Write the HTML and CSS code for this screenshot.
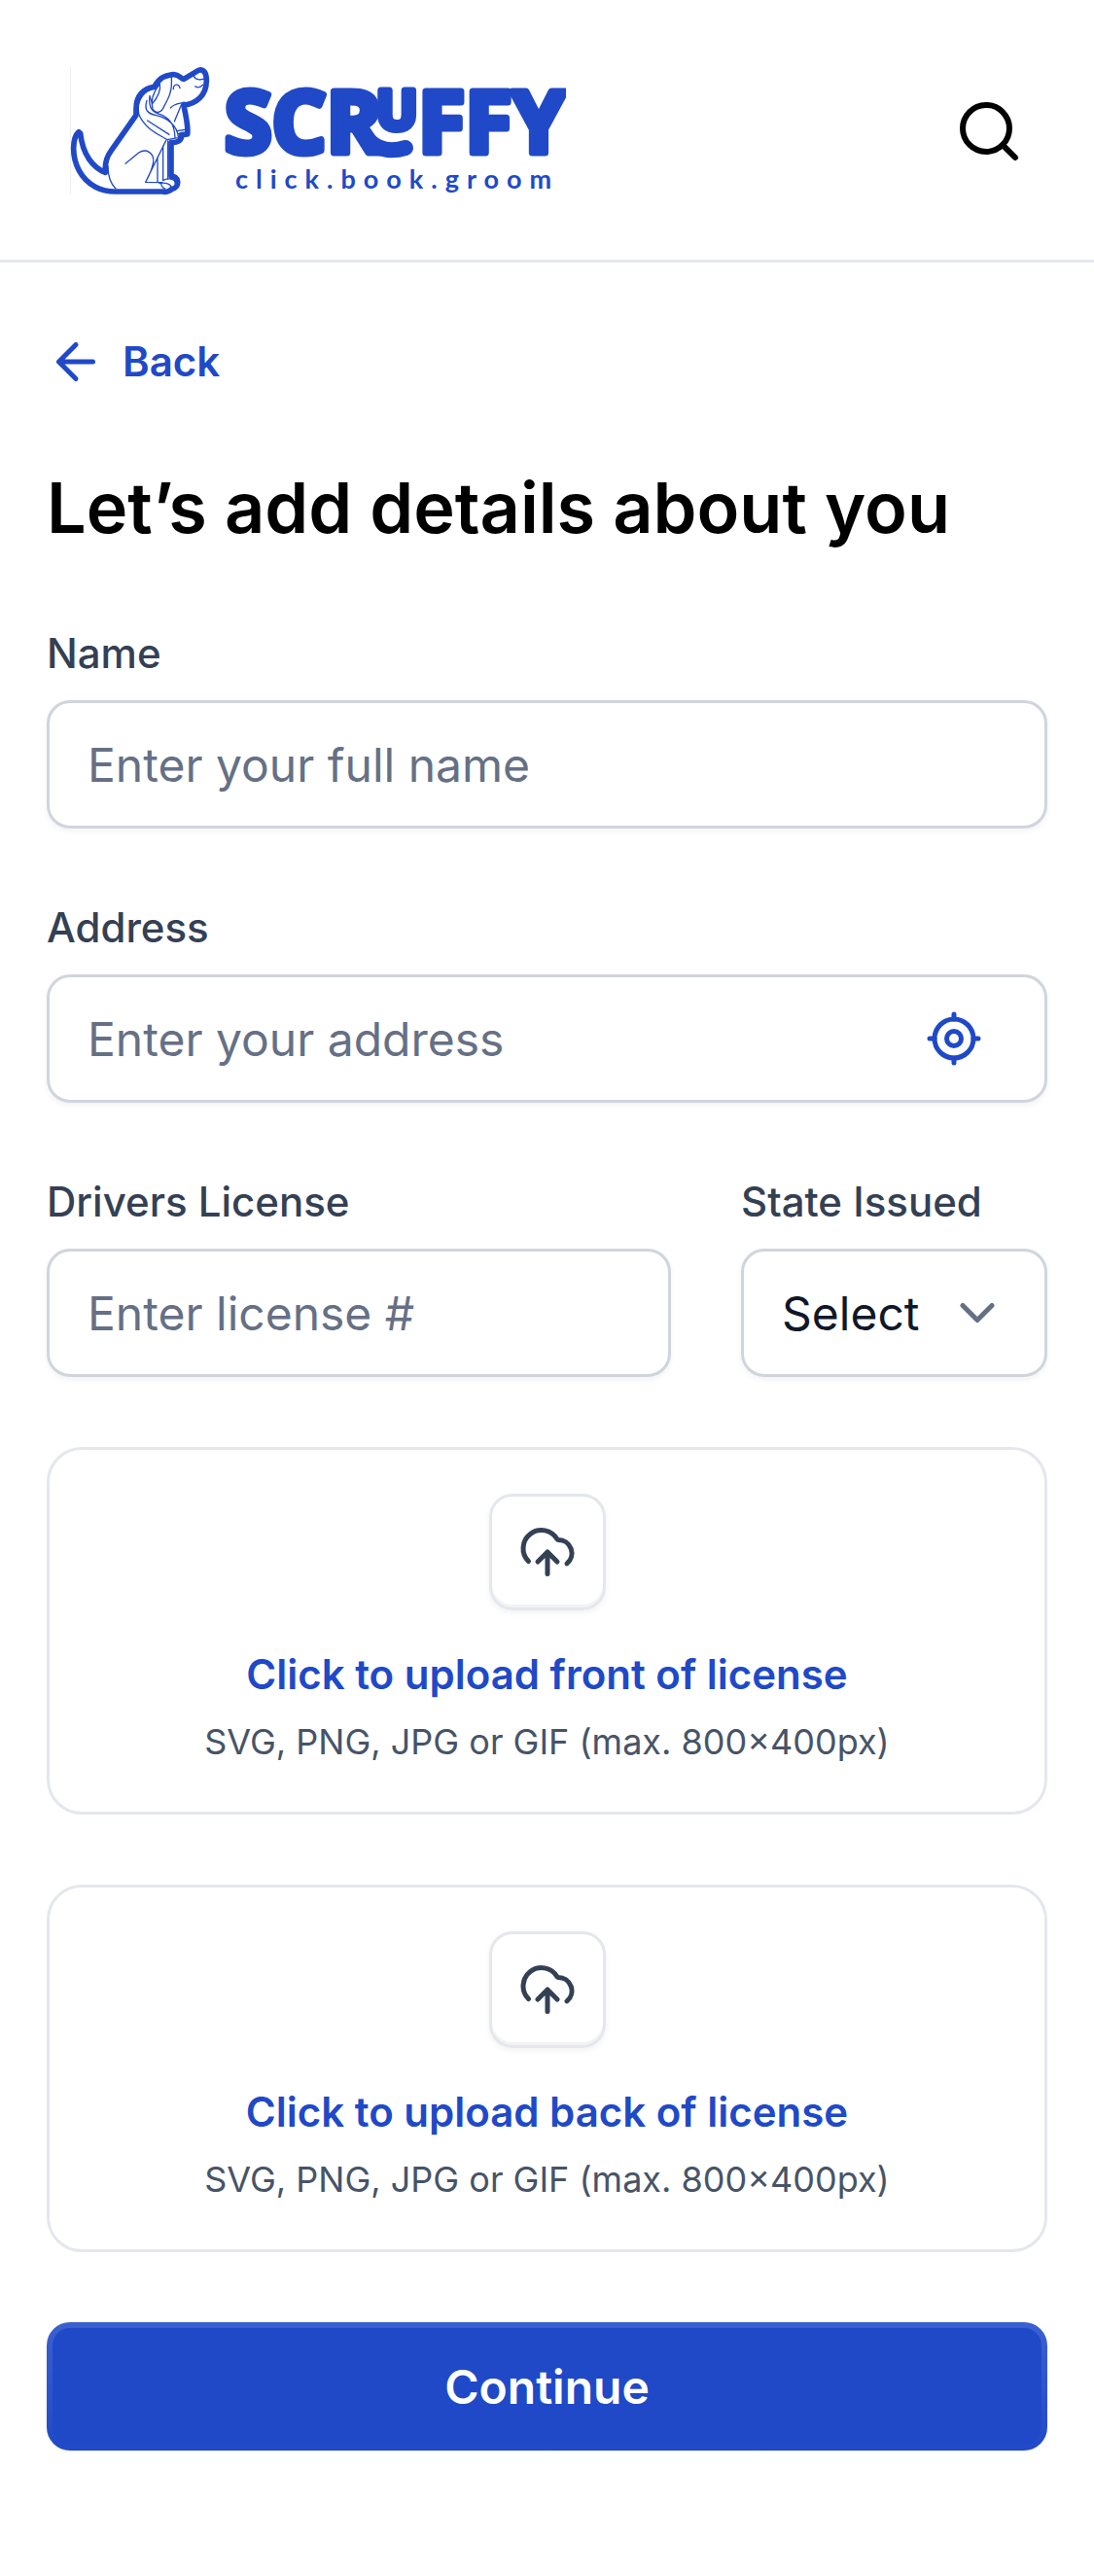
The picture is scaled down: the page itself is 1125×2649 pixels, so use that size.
FILE: index.html
```html
<!DOCTYPE html>
<html lang="en">
<head>
  <meta charset="UTF-8">
  <meta name="viewport" content="width=device-width, initial-scale=1.0">
  <title>Scruffy - Your details</title>
  <link rel="stylesheet" href="styles.css">
</head>
<body>
  <header class="header">
    <a href="#" class="logo" aria-label="Scruffy home">
      <svg class="logo-art" viewBox="0 0 510 132">
        <path class="logo-edge" d="M0.5 0V131"/>
        <!-- dog -->
        <g class="dog" transform="translate(-22 -19) scale(.3333)">
          <path class="dog-outline" d="M93 257C73 275 70 332 94 376C120 424 165 441 205 441L352 441C362 444 374 440 380 433C392 432 399 422 398 410C397 399 388 393 378 394L378 290C398 291 411 284 410 266L428 264C432 240 423 210 417 174C455 170 487 145 487 98C487 74 478 62 462 67L417 94C407 94 403 78 384 80C354 84 341 92 326 118C294 122 270 145 270 185L270 205L192 316C178 335 173 357 175 382C138 368 105 328 98 262Z"/>
          <path d="M183 362C183 395 190 415 207 432M237 355L278 321C300 307 326 320 323 350C320 375 308 395 299 412L350 413M362 284L299 412M336 335V411M353 300V407M368 285V402"/>
          <path d="M350 413C344 419 350 430 359 432M342 416C362 411 381 420 377 431M353 406C375 398 390 402 391 416"/>
          <path d="M326 120C292 134 268 163 279 205C300 250 340 265 366 281M305 222L372 265M303 160C294 190 305 200 332 206C368 214 397 238 400 272M312 145C306 190 326 197 350 205C380 220 388 240 390 274M366 281L403 274M410 172L388 225M398 254L426 249M402 262L426 259"/>
          <path d="M343 108C318 140 315 165 321 186C332 204 350 196 356 178C371 152 382 130 379 90M343 108C347 130 335 152 320 170L313 150"/>
          <path d="M385 125C384 107 402 108 405 122M376 183C390 167 410 170 418 165M452 116C460 122 470 118 476 112M446 82C452 98 470 97 481 93"/>
        </g>
        <text class="wordmark" x="159" y="88">SCR<tspan class="wordmark-small" x="315" y="64">U</tspan><tspan x="358" y="88">FFY</tspan></text>
        <path class="swash" d="M308 76C318 86 332 87 345 83"/>
        <text class="tagline" x="170" y="125">click.book.groom</text>
      </svg>
    </a>
    <button type="button" class="icon-button" aria-label="Search">
      <svg class="icon-search" viewBox="0 0 24 24"><circle cx="11" cy="11" r="8"/><path d="M21 21l-4.3-4.3"/></svg>
    </button>
  </header>

  <main class="content">
    <a href="#" class="back">
      <svg class="icon" viewBox="0 0 24 24"><path d="M19 12H5M12 19l-7-7 7-7"/></svg>
      Back
    </a>
    <h1>Let’s add details about you</h1>

    <form class="form">
      <div class="field">
        <label for="fullName">Name</label>
        <div class="control">
          <input type="text" id="fullName" placeholder="Enter your full name">
        </div>
      </div>
      <div class="field">
        <label for="address">Address</label>
        <div class="control control-action">
          <input type="text" id="address" placeholder="Enter your address">
          <button type="button" class="icon-button locate" aria-label="Use my location">
            <svg class="icon" viewBox="0 0 24 24"><circle cx="12" cy="12" r="8"/><circle cx="12" cy="12" r="3"/><path d="M12 2v2M12 20v2M2 12h2M20 12h2"/></svg>
          </button>
        </div>
      </div>
      <div class="field-row">
        <div class="field">
          <label for="license">Drivers License</label>
          <div class="control">
            <input type="text" id="license" placeholder="Enter license #">
          </div>
        </div>
        <div class="field">
          <label for="state">State Issued</label>
          <div class="control">
            <select id="state">
              <option>Select</option>
              <option>CA</option>
              <option>NY</option>
              <option>TX</option>
            </select>
            <svg class="icon chevron" viewBox="0 0 24 24"><path d="M6 9l6 6 6-6"/></svg>
          </div>
        </div>
      </div>

      <label class="upload" for="licenseFront">
        <input type="file" id="licenseFront" class="upload-input" accept="image/*">
        <span class="upload-icon">
          <svg class="icon icon-cloud" viewBox="0 0 20 20"><path d="M6.667 13.333L10 10m0 0l3.333 3.333M10 10v7.5m6.667-3.548a4.583 4.583 0 0 0-2.917-8.119.516.516 0 0 1-.444-.25 6.25 6.25 0 1 0-9.816 7.58"/></svg>
        </span>
        <span class="upload-title">Click to upload front of license</span>
        <span class="upload-hint">SVG, PNG, JPG or GIF (max. 800x400px)</span>
      </label>
      <label class="upload" for="licenseBack">
        <input type="file" id="licenseBack" class="upload-input" accept="image/*">
        <span class="upload-icon">
          <svg class="icon icon-cloud" viewBox="0 0 20 20"><path d="M6.667 13.333L10 10m0 0l3.333 3.333M10 10v7.5m6.667-3.548a4.583 4.583 0 0 0-2.917-8.119.516.516 0 0 1-.444-.25 6.25 6.25 0 1 0-9.816 7.58"/></svg>
        </span>
        <span class="upload-title">Click to upload back of license</span>
        <span class="upload-hint">SVG, PNG, JPG or GIF (max. 800x400px)</span>
      </label>

      <button type="submit" class="submit">Continue</button>
    </form>
  </main>
</body>
</html>
```

FILE: styles.css
```css
* {
  box-sizing: border-box;
}

body {
  margin: 0;
  font-family: Inter, "Liberation Sans", sans-serif;
  background: #fff;
  color: #000;
}

input, select, button {
  font-family: inherit;
}

/* header */
.header {
  display: flex;
  align-items: center;
  justify-content: space-between;
  padding: 69px 72px 66px;
  border-bottom: 3px solid #e4e7ec;
}

.logo {
  display: block;
}

.logo-art {
  display: block;
  width: 510px;
  height: 132px;
}

.logo-edge {
  stroke: #eeeeee;
}

.dog {
  fill: none;
  stroke: #2049c8;
  stroke-width: 4;
  stroke-linecap: round;
  stroke-linejoin: round;
}

.dog-outline {
  stroke-width: 17;
}

.wordmark {
  font-family: "Open Sans", sans-serif;
  font-size: 88px;
  font-weight: 700;
  fill: #2049c8;
  stroke: #2049c8;
  stroke-width: 7;
  stroke-linejoin: round;
}

.wordmark-small {
  font-size: 56px;
}

.swash {
  fill: none;
  stroke: #2049c8;
  stroke-width: 16;
  stroke-linecap: round;
}

.tagline {
  font-family: Lato, sans-serif;
  font-size: 27px;
  font-weight: 700;
  letter-spacing: 8px;
  fill: #2049c8;
}

.icon-button {
  display: flex;
  padding: 0;
  border: 0;
  background: none;
  cursor: pointer;
}

.icon {
  width: 60px;
  height: 60px;
  flex: none;
  fill: none;
  stroke: currentColor;
  stroke-width: 2;
  stroke-linecap: round;
  stroke-linejoin: round;
}

.icon-search {
  width: 72px;
  height: 72px;
  fill: none;
  stroke: #000;
  stroke-width: 2;
  stroke-linecap: round;
}

/* page */
.content {
  padding: 72px 48px 129px;
}

.back {
  display: flex;
  align-items: center;
  gap: 18px;
  width: fit-content;
  font-size: 42px;
  line-height: 60px;
  font-weight: 600;
  color: #2049c8;
  text-decoration: none;
}

h1 {
  margin: 72px 0;
  font-size: 72px;
  line-height: 96px;
  font-weight: 600;
}

.form {
  display: flex;
  flex-direction: column;
  gap: 72px;
}

.field {
  display: flex;
  flex-direction: column;
  gap: 18px;
}

.field label {
  font-size: 42px;
  line-height: 60px;
  font-weight: 500;
  color: #344054;
}

.field-row {
  display: grid;
  grid-template-columns: minmax(0, 1fr) 315px;
  gap: 72px;
}

.control {
  position: relative;
  display: flex;
  align-items: center;
  height: 132px;
  border: 3px solid #d0d5dd;
  border-radius: 24px;
  background: #fff;
  box-shadow: 0 3px 6px rgba(16, 24, 40, 0.05);
}

.control input, .control select {
  flex: 1;
  min-width: 0;
  height: 100%;
  padding: 0 39px;
  border: 0;
  border-radius: 24px;
  outline: 0;
  background: transparent;
  font-size: 48px;
  color: #101828;
}

.control input::placeholder {
  color: #667085;
  opacity: 1;
}

.control select {
  appearance: none;
}

.control-action {
  padding-right: 63px;
}

.locate {
  color: #2049c8;
}

.chevron {
  position: absolute;
  right: 39px;
  color: #667085;
  pointer-events: none;
}

/* upload cards */
.upload {
  position: relative;
  display: flex;
  flex-direction: column;
  align-items: center;
  padding: 45px;
  border: 3px solid #e4e7ec;
  border-radius: 36px;
  text-align: center;
  cursor: pointer;
}

.upload-input {
  position: absolute;
  width: 1px;
  height: 1px;
  opacity: 0;
}

.upload-icon {
  display: flex;
  align-items: center;
  justify-content: center;
  width: 120px;
  height: 120px;
  margin-bottom: 36px;
  border: 3px solid #e4e7ec;
  border-radius: 24px;
  color: #344054;
  box-shadow: 0 3px 6px rgba(16, 24, 40, 0.05), inset 0 -3px 0 rgba(16, 24, 40, 0.05);
}

.icon-cloud {
  stroke-width: 1.67;
}

.upload-title {
  margin-bottom: 12px;
  font-size: 42px;
  line-height: 60px;
  font-weight: 600;
  color: #2049c8;
}

.upload-hint {
  font-size: 36px;
  line-height: 54px;
  color: #475467;
}

.submit {
  height: 132px;
  border: 6px solid transparent;
  border-radius: 24px;
  background: linear-gradient(#2049c8, #2049c8) padding-box, linear-gradient(#3b60d0, #2049c8) border-box;
  font-size: 48px;
  font-weight: 600;
  color: #fff;
  cursor: pointer;
}
```
